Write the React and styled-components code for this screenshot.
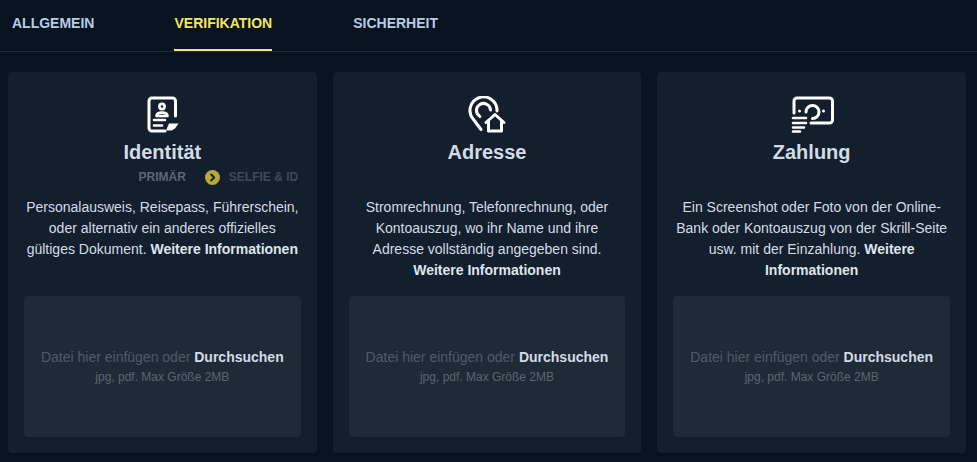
import React from "react";
import styled, { createGlobalStyle } from "styled-components";

const Global = createGlobalStyle`
  html, body { margin: 0; padding: 0; background: #07131f; }
  body { font-family: "Liberation Sans", Arial, sans-serif; }
  * { box-sizing: border-box; }
`;
const Page = styled.div`
  width: 977px; height: 462px; overflow: hidden; background: #07131f;
  display: flex; flex-direction: column;
`;
const Tabs = styled.nav`
  display: flex; height: 52px; border-bottom: 1px solid #1f2a36; padding-left: 12px; flex: none;
`;
const Tab = styled.div`
  height: 51px; padding-top: 15px; font-size: 14px; line-height: 16px; font-weight: 700;
  margin-right: ${p => p.$gap}px;
  color: ${p => (p.$active ? "#f7e463" : "#b9cbe6")};
  border-bottom: 2px solid ${p => (p.$active ? "#f5e77e" : "transparent")};
`;
const Cards = styled.div`
  display: grid; grid-template-columns: repeat(3, 1fr); gap: 16px;
  padding: 20px 11px 0 8px;
`;
const Card = styled.section`
  height: 381px; background: #131f2c; border-radius: 4px; padding: 24px 16px 16px;
  display: flex; flex-direction: column; align-items: center;
`;
const IconBox = styled.div`
  height: 37px; flex: none; color: #fff; display: flex; justify-content: center;
`;
const Title = styled.h2`
  margin: 4px 0 0; flex: none; font-size: 20px; line-height: 30px; font-weight: 700; color: #d3dce6;
`;
const Steps = styled.div`
  height: 20px; flex: none; margin-left: 112px; display: flex; align-items: center; font-size: 12px; font-weight: 700;
`;
const StepLabel = styled.span`
  color: ${p => (p.$dim ? "#3d4957" : "#5d6877")};
`;
const StepDot = styled.span`
  width: 15px; height: 15px; margin: 0 9px 0 19px; border-radius: 50%; background: #b9a93a;
  display: flex; align-items: center; justify-content: center;
`;
const Desc = styled.p`
  margin: 10px 0 0; height: 84px; flex: none; text-align: center; font-size: 14px; line-height: 21px;
  color: #d3dce6; width: 100%;
`;
const More = styled.b`
  font-weight: 700; color: #dfe5ec;
`;
const Drop = styled.div`
  margin-top: 15px; flex: none; width: 100%; height: 141px; border-radius: 4px; background: #1f2a37;
  display: flex; flex-direction: column; align-items: center; justify-content: center;
`;
const DropLine = styled.div`
  font-size: 14px; line-height: 21px; color: #505b69;
`;
const Browse = styled.b`
  color: #d3dce6; font-weight: 700;
`;
const DropHint = styled.div`
  font-size: 12px; line-height: 18px; color: #5c6570;
`;

const IdIcon = () => (
  <svg width="36" height="37" viewBox="0 0 36 37" fill="none" stroke="currentColor" strokeWidth="3" strokeLinecap="round" strokeLinejoin="round">
    <path d="M31.500 20V5a3 3 0 0 0-3-3H8a3 3 0 0 0-3 3v27a3 3 0 0 0 3 3h13" />
    <circle cx="18" cy="10.500" r="2.600" strokeWidth="2.600" />
    <path d="M12.500 20c0-4.500 11-4.500 11 0z" strokeWidth="2.600" />
    <path d="M10 24h11M10 29.500h8" strokeWidth="2.600" />
    <path d="M22 34.500l3-7h9.500l-3.500 5-3.500 2z" fill="currentColor" stroke="none" />
  </svg>
);
const HomePin = () => (
  <svg width="40" height="37" viewBox="0 0 40 37" fill="none" stroke="currentColor" strokeWidth="3" strokeLinecap="round" strokeLinejoin="round">
    <path d="M14 33.500 6.500 23.500A13.500 13.500 0 1 1 30 15" />
    <path d="M13 20.500A7 7 0 1 1 23.500 14" />
    <path d="M19 26.500 28 18.500 37 26.500" />
    <path d="M21.500 25v10h13V25" />
  </svg>
);
const MoneyIcon = () => (
  <svg width="44" height="37" viewBox="0 0 44 37" fill="none" stroke="currentColor" strokeWidth="3" strokeLinecap="round" strokeLinejoin="round">
    <path d="M4 17V5a3 3 0 0 1 3-3h32.500a3 3 0 0 1 3 3v19a3 3 0 0 1-3 3H21" />
    <path d="M16 16A6.500 6.500 0 1 1 22.500 22.500" />
    <path d="M3 22H16M3 27H16M3 31.500H14M3 35.500H10" strokeWidth="2.600" />
    <circle cx="9.500" cy="15" r="1.500" fill="currentColor" stroke="none" />
    <circle cx="33.500" cy="15" r="1.500" fill="currentColor" stroke="none" />
  </svg>
);

const cards = [
  { title: "Identität", Icon: IdIcon, steps: true,
    text: ["Personalausweis, Reisepass, Führerschein,", <br key="a" />, "oder alternativ ein anderes offizielles", <br key="b" />, "gültiges Dokument. "] },
  { title: "Adresse", Icon: HomePin,
    text: ["Stromrechnung, Telefonrechnung, oder", <br key="a" />, "Kontoauszug, wo ihr Name und ihre", <br key="b" />, "Adresse vollständig angegeben sind.", <br key="c" />] },
  { title: "Zahlung", Icon: MoneyIcon,
    text: ["Ein Screenshot oder Foto von der Online-", <br key="a" />, "Bank oder Kontoauszug von der Skrill-Seite", <br key="b" />, "usw. mit der Einzahlung. "] },
];

export default function App() {
  return (
    <Page>
      <Global />
      <Tabs>
        <Tab $gap={80}>ALLGEMEIN</Tab>
        <Tab $active $gap={81}>VERIFIKATION</Tab>
        <Tab $gap={0}>SICHERHEIT</Tab>
      </Tabs>
      <Cards>
        {cards.map(({ title, Icon, steps, text }) => (
          <Card key={title}>
            <IconBox><Icon /></IconBox>
            <Title>{title}</Title>
            <Steps>
              {steps && (
                <>
                  <StepLabel>PRIMÄR</StepLabel>
                  <StepDot>
                    <svg width="9" height="9" viewBox="0 0 9 9" fill="none" stroke="#131f2c" strokeWidth="2" strokeLinecap="round" strokeLinejoin="round">
                      <path d="M3.200 1.500 6.200 4.500 3.200 7.500" />
                    </svg>
                  </StepDot>
                  <StepLabel $dim>SELFIE &amp; ID</StepLabel>
                </>
              )}
            </Steps>
            <Desc>
              {text}
              <More>Weitere Informationen</More>
            </Desc>
            <Drop>
              <DropLine>Datei hier einfügen oder <Browse>Durchsuchen</Browse></DropLine>
              <DropHint>jpg, pdf. Max Größe 2MB</DropHint>
            </Drop>
          </Card>
        ))}
      </Cards>
    </Page>
  );
}
